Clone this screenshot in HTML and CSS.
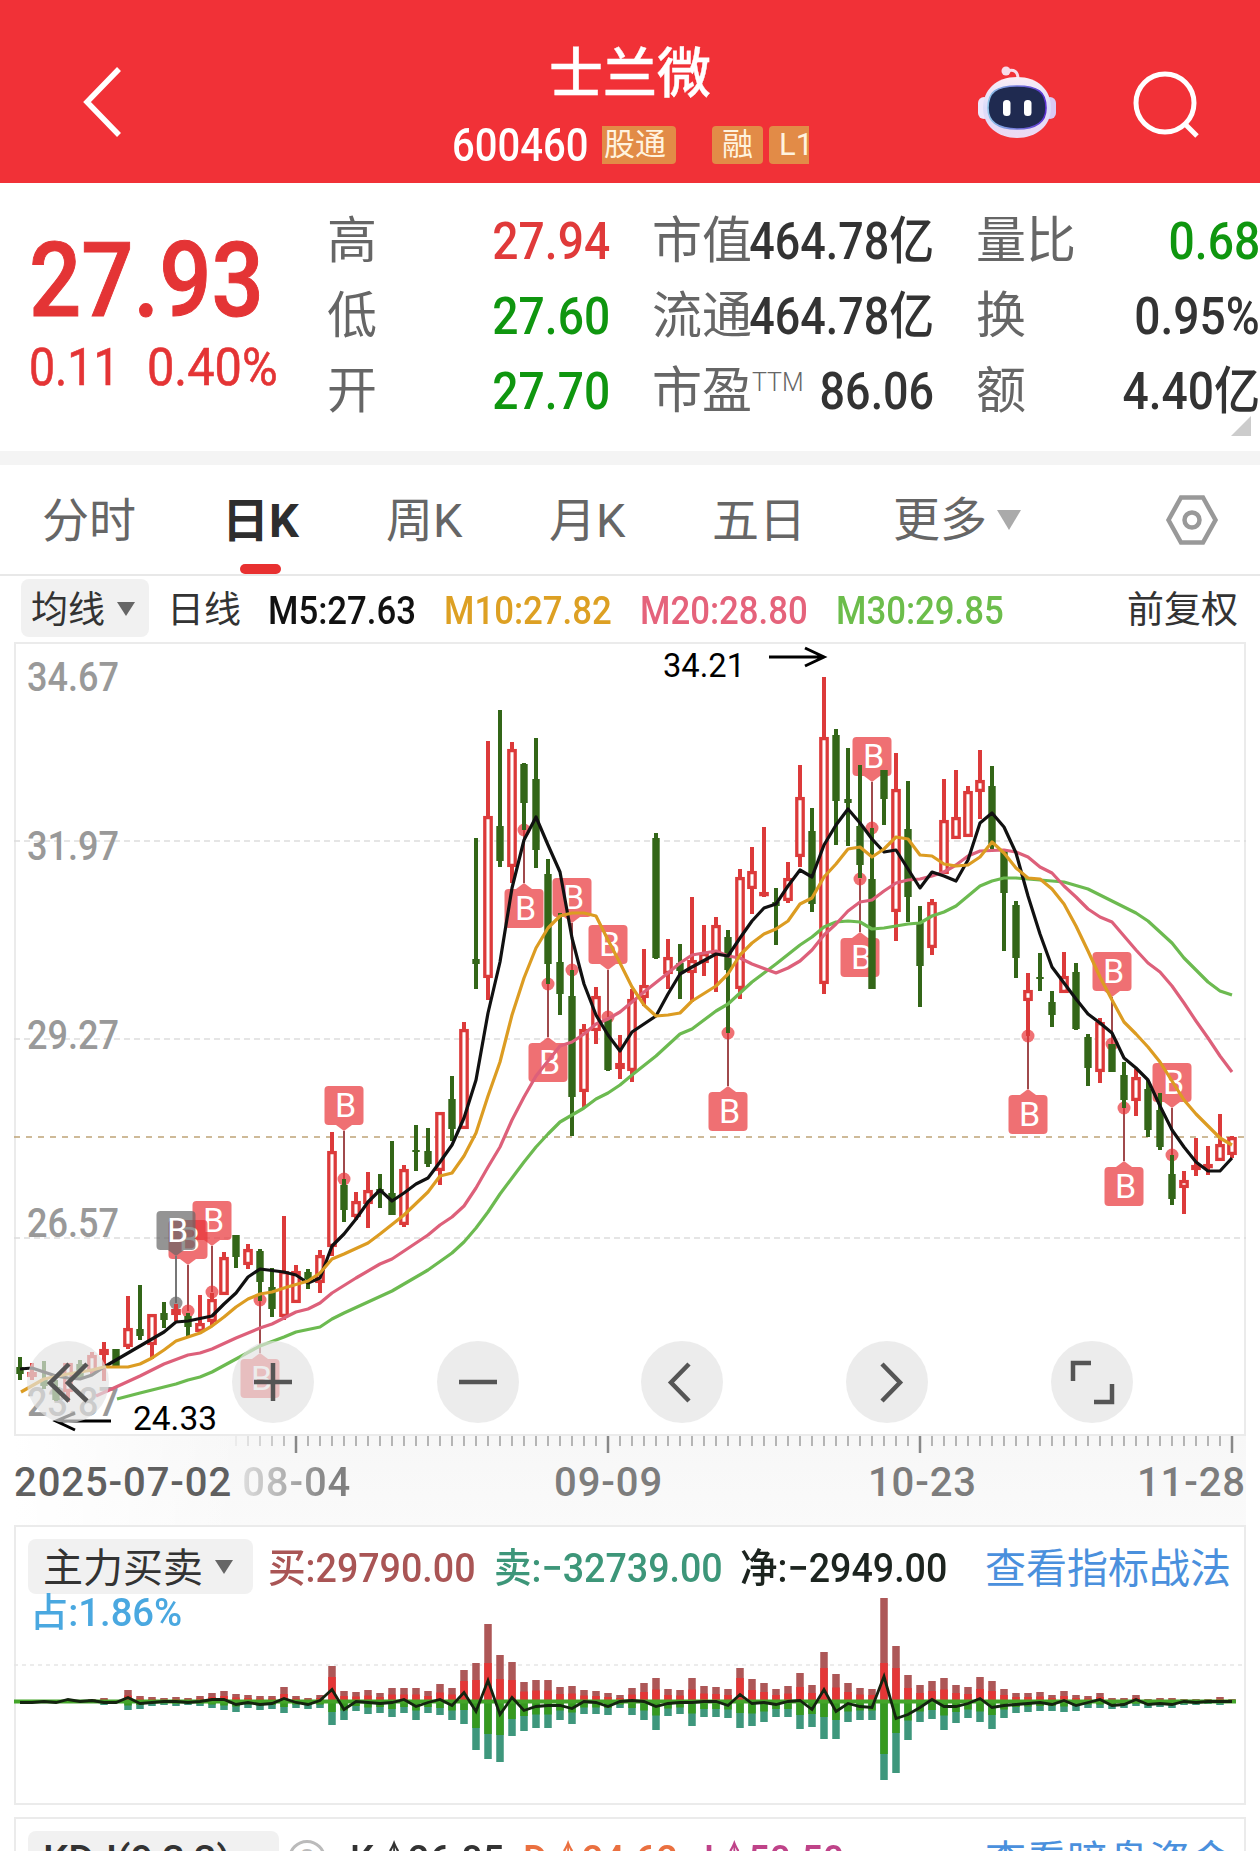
FILE: index.html
```html
<!DOCTYPE html>
<html lang="zh-CN">
<head>
  <meta charset="UTF-8">
  <title>士兰微 600460</title>
  <link rel="stylesheet" href="styles.css">
</head>
<body>

  <header class="topbar">
    <svg class="back" viewBox="0 0 50 80"><path d="M41 7 L9 40 L41 73"/></svg>
    <div class="stock">
      <h1>士兰微</h1>
      <div class="stock-sub">
        <span class="code">600460</span>
        <span class="tag tag-gt">股通</span>
        <span class="tag tag-rong">融</span>
        <span class="tag tag-l1">L1</span>
      </div>
    </div>
    <svg class="robot" viewBox="0 0 80 74">
      <defs>
        <linearGradient id="shell" x1="0" y1="0" x2="0" y2="1">
          <stop offset="0" stop-color="#fbeef6"/>
          <stop offset="0.5" stop-color="#dcdcfa"/>
          <stop offset="1" stop-color="#eed9f2"/>
        </linearGradient>
        <linearGradient id="rim" x1="0" y1="0" x2="1" y2="0">
          <stop offset="0" stop-color="#8fc4e8"/>
          <stop offset="1" stop-color="#5a2fd0"/>
        </linearGradient>
      </defs>
      <path d="M29 7 Q40 4 40 15" fill="none" stroke="#f8dcea" stroke-width="3"/>
      <circle cx="28" cy="7" r="4.5" fill="#f8dcea"/>
      <rect x="0" y="33" width="12" height="22" rx="6" fill="#eee6fb"/>
      <rect x="66" y="33" width="12" height="22" rx="6" fill="#d9c9f5"/>
      <path d="M39 13 C60 13 73 26 73 44 C73 62 58 74 39 74 C20 74 5 62 5 44 C5 26 18 13 39 13 Z" fill="url(#shell)"/>
      <path d="M39 22 C60 22 68 28 68 44 C68 58 58 65 39 65 C20 65 10 58 10 44 C10 28 18 22 39 22 Z" fill="#1f2a50" stroke="url(#rim)" stroke-width="1.6"/>
      <rect x="25" y="36" width="7.5" height="16" rx="3.5" fill="#fff"/>
      <rect x="46" y="36" width="7.5" height="16" rx="3.5" fill="#fff"/>
    </svg>
    <svg class="search" viewBox="0 0 70 70"><circle cx="33" cy="33" r="29"/><path d="M53 54 L65 66"/></svg>
  </header>

  <section class="quote">
    <div class="price">
      <div class="last">27.93</div>
      <div class="change"><span>0.11</span><span class="pct">0.40%</span></div>
    </div>
    <dl class="col col-a">
      <dt>高</dt><dd class="up">27.94</dd>
      <dt>低</dt><dd class="down">27.60</dd>
      <dt>开</dt><dd class="down">27.70</dd>
    </dl>
    <dl class="col col-b">
      <dt>市值</dt><dd>464.78亿</dd>
      <dt>流通</dt><dd>464.78亿</dd>
      <dt>市盈<sup>TTM</sup></dt><dd>86.06</dd>
    </dl>
    <dl class="col col-c">
      <dt>量比</dt><dd class="down">0.68</dd>
      <dt>换</dt><dd>0.95%</dd>
      <dt>额</dt><dd>4.40亿</dd>
    </dl>
    <i class="corner"></i>
  </section>

  <nav class="tabs">
    <a class="tab t1">分时</a>
    <a class="tab t2 active">日K</a>
    <a class="tab t3">周K</a>
    <a class="tab t4">月K</a>
    <a class="tab t5">五日</a>
    <a class="tab t6">更多<i class="caret caret-lg"></i></a>
    <svg class="gear" viewBox="0 0 54 52"><path d="M16 3.5 H38 L50.500 26 L38 48.500 H16 L3.500 26 Z"/><circle cx="27" cy="26" r="7.500"/></svg>
  </nav>

  <div class="ma-row">
    <span class="pill">均线<i class="caret"></i></span>
    <span class="ma-name">日线</span>
    <span class="ma m5">M5:27.63</span>
    <span class="ma m10">M10:27.82</span>
    <span class="ma m20">M20:28.80</span>
    <span class="ma m30">M30:29.85</span>
    <span class="adjust">前复权</span>
  </div>

  <section class="kline">
    <svg id="kline" viewBox="14 643 1232 793"></svg>
    <div class="tools">
      <button><svg viewBox="0 0 82 82"><path d="M42 23 L23 42 L42 60 M60 23 L41 42 L60 60"/></svg></button>
      <button><svg viewBox="0 0 82 82"><path d="M22 41 H60 M41 22 V60"/></svg></button>
      <button><svg viewBox="0 0 82 82"><path d="M22 41 H60"/></svg></button>
      <button><svg viewBox="0 0 82 82"><path d="M48 23 L30 41.500 L48 60"/></svg></button>
      <button><svg viewBox="0 0 82 82"><path d="M36 23 L54 41.500 L36 60"/></svg></button>
      <button><svg viewBox="0 0 82 82"><path d="M22 40 V22 H40 M61 43 V61 H43"/></svg></button>
    </div>
  </section>

  <div class="axis">
    <svg id="ruler" viewBox="14 1436 1232 18"></svg>
    <div class="dates">
      <span class="d0">2025-07-02</span>
      <span class="d1">08-04</span>
      <span class="d2">09-09</span>
      <span class="d3">10-23</span>
      <span class="d4">11-28</span>
    </div>
  </div>

  <section class="panel flow">
    <div class="panel-head">
      <span class="pill">主力买卖<i class="caret"></i></span>
      <span class="val f-buy">买:29790.00</span>
      <span class="val f-sell">卖:−32739.00</span>
      <span class="val f-net">净:−2949.00</span>
      <a class="link">查看指标战法</a>
    </div>
    <div class="f-ratio">占:1.86%</div>
    <svg id="flow" viewBox="14 1598 1232 205"></svg>
  </section>

  <section class="panel kdj">
    <div class="panel-head">
      <span class="pill">KDJ(9,3,3)</span>
      <span class="help">?</span>
      <span class="val k-k">K:<i class="arrow">↑</i>26.85</span>
      <span class="val k-d">D:<i class="arrow">↑</i>24.62</span>
      <span class="val k-j">J:<i class="arrow">↑</i>50.50</span>
      <a class="link">查看暗盘资金</a>
    </div>
  </section>

  <script src="script.js"></script>
</body>
</html>
```
FILE: styles.css
```css
* {
  box-sizing: border-box;
}

body {
  margin: 0;
  width: 1260px;
  height: 1851px;
  overflow: hidden;
  background: #fff;
  color: #333;
  font-family: Roboto, "Noto Sans CJK SC", sans-serif;
}

i {
  font-style: normal;
}

svg {
  display: block;
}

/* top bar */
.topbar {
  display: flex;
  height: 183px;
  background: #f13137;
  color: #fff;
}

.back {
  width: 50px;
  height: 80px;
  margin: 62px 0 0 78px;
  fill: none;
  stroke: #fff;
  stroke-width: 5.5;
}

.stock {
  width: 358px;
  margin-left: 324px;
}

h1 {
  margin: 35px 0 0;
  width: 356px;
  text-align: center;
  font-size: 54px;
  line-height: 80px;
  font-weight: 500;
  -webkit-text-stroke: 0.4px #fff;
}

.stock-sub {
  display: flex;
  height: 59px;
  align-items: center;
}

.code {
  width: 150px;
  font-size: 46px;
  font-weight: 500;
  transform: scaleX(0.87);
  transform-origin: left;
}

.tag {
  height: 38px;
  line-height: 37px;
  font-size: 31px;
  background: #e28b47;
  color: #fff3df;
  overflow: hidden;
  white-space: nowrap;
}

.tag-gt {
  width: 74px;
  padding-left: 2px;
  border-radius: 0 4px 4px 0;
}

.tag-rong {
  width: 51px;
  margin-left: 36px;
  padding-left: 10px;
  border-radius: 4px;
}

.tag-l1 {
  width: 40px;
  margin-left: 6px;
  padding-left: 10px;
  border-radius: 4px 0 0 4px;
}

.robot {
  width: 80px;
  height: 74px;
  margin: 64px 0 0 168px;
}

.search {
  width: 70px;
  height: 70px;
  margin: 70px 0 0 74px;
  fill: none;
  stroke: #fff;
  stroke-width: 5;
}

/* quote */
.quote {
  position: relative;
  display: flex;
  height: 282px;
  border-bottom: 14px solid #f4f4f4;
}

.price {
  width: 327px;
  padding: 42px 0 0 29px;
  color: #e43435;
}

.last {
  width: 260px;
  font-size: 104px;
  line-height: 112px;
  font-weight: 500;
  transform: scaleX(0.885);
  transform-origin: left;
  -webkit-text-stroke: 1px #e43435;
}

.change {
  display: flex;
  font-size: 51px;
  line-height: 61px;
}

.change span {
  width: 118px;
  transform: scaleX(0.91);
  transform-origin: left;
  -webkit-text-stroke: 0.6px #e43435;
}

.change .pct {
  transform: scaleX(0.955);
}

.col {
  display: grid;
  grid-template-columns: 94px minmax(0, 1fr);
  grid-auto-rows: 75px;
  align-content: start;
  margin: 21px 0 0;
  line-height: 75px;
  white-space: nowrap;
}

.col dt {
  font-size: 50px;
  color: #666;
}

.col dd {
  margin: 0;
  justify-self: end;
  font-size: 51px;
  font-weight: 500;
  transform: scaleX(0.905);
  transform-origin: right;
}

.col-b dd {
  transform: scaleX(0.88);
}

.col sup {
  font-size: 25px;
  font-weight: 300;
  line-height: 0;
  vertical-align: 17px;
}

.col-a {
  width: 283px;
}

.col-b {
  width: 282px;
  margin-left: 42px;
}

.col-c {
  width: 284px;
  margin-left: 42px;
}

.col .up {
  color: #e03a3a;
}

.col .down {
  color: #0f960f;
}

.corner {
  position: absolute;
  right: 9px;
  bottom: 15px;
  border-left: 20px solid transparent;
  border-bottom: 20px solid #ccc;
}

/* tabs */
.tabs {
  display: flex;
  height: 111px;
  border-bottom: 2px solid #e8e8e8;
  font-size: 47px;
  line-height: 111px;
  color: #666;
}

.tab {
  position: relative;
  height: 109px;
  white-space: nowrap;
}

.t1 { width: 180px; margin-left: 42px; }
.t2 { width: 164px; }
.t3 { width: 163px; }
.t4 { width: 163px; }
.t5 { width: 181px; }
.t6 { width: 274px; display: flex; align-items: center; gap: 10px; }

.active {
  font-weight: 700;
  color: #2e2e2e;
}

.active::after {
  content: "";
  position: absolute;
  left: 18px;
  bottom: 0;
  width: 41px;
  height: 10px;
  border-radius: 5px;
  background: #e83030;
}

.gear {
  width: 54px;
  height: 52px;
  margin-top: 29px;
  margin-left: -2px;
  fill: none;
  stroke: #999;
  stroke-width: 4.5;
}

.caret {
  border: 9px solid transparent;
  border-top: 14px solid #666;
  border-bottom: 0;
}

.caret-lg {
  border-width: 20px 12px 0;
  border-top-color: #aaa;
}

/* moving averages */
.ma-row {
  display: flex;
  align-items: center;
  height: 67px;
  padding: 0 22px 3px 21px;
  font-size: 37px;
  line-height: 58px;
  white-space: nowrap;
}

.pill {
  display: flex;
  align-items: center;
  background: #f1f1f1;
  border-radius: 8px;
}

.ma-row .pill {
  width: 128px;
  height: 58px;
  padding: 5px 0 0 10px;
  gap: 12px;
}

.pill .caret {
  margin-top: -3px;
}

.ma-name {
  width: 101px;
  margin-left: 18px;
  padding-top: 5px;
}

.ma {
  padding-top: 5px;
  font-size: 38px;
  font-weight: 500;
  transform: scaleX(0.915);
  transform-origin: left;
}

.m5 { width: 176px; color: #111; }
.m10 { width: 196px; color: #dda023; }
.m20 { width: 196px; color: #e5637b; }
.m30 { width: 196px; color: #6cbd4b; }

.adjust {
  margin-left: auto;
  padding-top: 5px;
}

/* candles */
.kline {
  position: relative;
  width: 1232px;
  height: 794px;
  margin: -1px 14px 0;
  border: 2px solid #ebebeb;
}

#kline {
  width: 1232px;
  height: 793px;
  margin: -1px -2px;
}

#kline text {
  font-family: Roboto, sans-serif;
}

.tools {
  position: absolute;
  left: 11px;
  top: 697px;
  display: flex;
  gap: 122.800px;
}

.tools button {
  width: 82px;
  height: 82px;
  padding: 0;
  border: 0;
  border-radius: 50%;
  background: rgba(227, 227, 227, 0.68);
}

.tools path {
  fill: none;
  stroke: #555;
  stroke-width: 4.5;
}

/* time axis */
.axis {
  height: 89px;
  margin: 0 14px;
  background: linear-gradient(90deg, #fff 0, rgba(255, 255, 255, 0) 230px), linear-gradient(#f7f7f7, #fafafa);
}

#ruler {
  width: 1232px;
  height: 18px;
}

.dates {
  display: flex;
  font-size: 40px;
  line-height: 58px;
  font-weight: 500;
  letter-spacing: 0.900px;
  color: #7d7d7d;
  white-space: nowrap;
}

.d0 { width: 229px; color: #606060; }
.d1 { width: 313px; }
.d2 { width: 315px; }
.d3 { width: 270px; }

.d1 {
  background: linear-gradient(90deg, #ddd 0, #808080 90px);
  background-clip: text;
  color: transparent;
}

/* indicator panels */
.panel {
  width: 1232px;
  margin: 0 14px;
  border: 2px solid #ebebeb;
  background: #fff;
}

.panel-head {
  display: flex;
  align-items: center;
  height: 55px;
  margin: 12px 13px 0 12px;
  font-size: 40px;
  line-height: 50px;
  font-weight: 500;
  white-space: nowrap;
}

.panel-head .pill {
  height: 55px;
  padding: 4px 0 0 15px;
  font-weight: 400;
}

.val {
  margin-top: 4px;
  transform: scaleX(0.94);
  transform-origin: left;
}

.flow {
  height: 280px;
}

.flow .pill {
  width: 225px;
  gap: 12px;
}

.f-buy { width: 226px; margin-left: 15px; color: #a95555; }
.f-sell { width: 246px; color: #3d9679; }
.f-net { width: 230px; color: #1c241f; }

.link {
  margin: 4px 0 0 auto;
  font-size: 41px;
  font-weight: 400;
  color: #4a90dd;
}

.f-ratio {
  width: 200px;
  height: 40px;
  margin: -1px 0 -35px 14px;
  line-height: 40px;
  font-size: 39px;
  font-weight: 500;
  color: #4aa8e0;
  transform: scaleX(0.98);
  transform-origin: left;
}

#flow {
  width: 1232px;
  height: 205px;
  margin-left: -2px;
}

.kdj {
  height: 120px;
  margin-top: 12px;
}

.kdj .pill {
  width: 251px;
  font-weight: 500;
}

.help {
  width: 38px;
  height: 38px;
  margin: 0 24px 0 9px;
  border: 3px solid #bbb;
  border-radius: 50%;
  text-align: center;
  font-size: 28px;
  line-height: 33px;
  color: #bbb;
}

.k-k { width: 173px; }
.k-d { width: 170px; color: #ea7040; }
.k-j { width: 170px; color: #bf4389; }

.arrow {
  display: inline-block;
  width: 26px;
  transform: scaleX(0.55);
  transform-origin: left;
}
```
FILE: script.js
```js
// candles: [up, high, bodyTop, bodyBottom, low]
const candles = [
  [0,1357,1367,1374,1380],[1,1363,1372,1377,1380],[0,1361,1379,1386,1389],[0,1380,1387,1400,1401],[1,1363,1363,1392,1402],
  [0,1360,1364,1378,1380],[1,1352,1355,1372,1375],[1,1342,1349,1355,1381],[0,1349,1349,1366,1366],[1,1296,1328,1347,1349],
  [0,1285,1329,1336,1340],[1,1314,1314,1345,1359],[0,1302,1313,1320,1328],[1,1304,1309,1315,1321],[0,1313,1316,1327,1336],
  [1,1295,1323,1332,1334],[1,1293,1299,1322,1326],[1,1252,1257,1295,1295],[0,1235,1235,1257,1268],[1,1244,1249,1265,1269],
  [0,1249,1251,1282,1301],[0,1268,1287,1309,1317],[1,1216,1271,1317,1320],[1,1265,1271,1303,1303],[0,1269,1272,1279,1289],
  [1,1250,1255,1283,1293],[1,1132,1151,1247,1256],[0,1179,1185,1210,1222],[1,1192,1201,1217,1220],[1,1172,1190,1204,1228],
  [0,1174,1189,1192,1208],[0,1141,1193,1215,1215],[1,1165,1169,1225,1227],[0,1125,1150,1152,1171],[0,1128,1151,1164,1167],
  [1,1112,1112,1171,1185],[0,1076,1099,1129,1141],[1,1022,1029,1129,1129],[0,838,959,964,989],[1,741,816,978,1000],
  [0,710,826,861,867],[1,742,749,867,883],[0,763,764,803,830],[0,738,779,850,868],[0,859,874,964,984],
  [0,913,962,994,1015],[0,970,996,1097,1136],[1,1024,1029,1092,1107],[1,987,996,1031,1044],[0,1018,1019,1070,1071],
  [1,1035,1063,1069,1079],[1,989,999,1071,1082],[1,949,985,998,1006],[0,833,838,958,959],[1,939,957,974,989],
  [0,944,963,971,999],[1,897,960,973,1002],[1,925,953,963,976],[1,917,925,954,992],[0,930,937,970,1033],
  [1,869,877,989,999],[1,847,871,889,914],[1,827,892,896,897],[0,888,902,906,945],[1,862,878,901,903],
  [1,765,797,857,867],[0,808,831,904,912],[1,677,737,984,994],[0,729,735,801,845],[0,748,799,803,846],
  [0,765,826,865,878],[0,828,879,989,989],[0,770,770,799,825],[1,753,789,912,941],[0,781,829,897,922],
  [0,906,923,966,1007],[1,899,902,948,955],[1,779,820,874,874],[1,770,817,839,839],[1,786,791,837,837],
  [1,750,780,792,819],[0,766,786,844,849],[0,851,851,893,951],[0,901,905,958,978],[1,973,990,1001,1036],
  [0,953,977,979,991],[0,991,1002,1015,1027],[1,952,976,993,993],[0,963,972,1029,1030],[0,1034,1037,1068,1086],
  [1,1018,1022,1072,1083],[0,1044,1044,1072,1072],[0,1062,1075,1100,1108],[1,1069,1077,1101,1116],[0,1080,1089,1130,1137],
  [0,1093,1110,1147,1150],[0,1155,1174,1199,1205],[1,1171,1180,1188,1214],[1,1138,1165,1170,1176],[1,1146,1164,1168,1175],
  [1,1114,1144,1161,1161],[1,1136,1137,1155,1158]
];

const averages = {
  "#6cba50": "117,1399 140,1393 176,1384 188,1380 200,1377 212,1372 236,1359 260,1346 284,1337 296,1332 320,1327 332,1319 344,1313 368,1302 392,1291 404,1284 428,1270 452,1253 464,1242 476,1228 488,1212 500,1194 512,1178 524,1162 536,1147 548,1134 560,1122 572,1115 584,1108 596,1099 608,1093 620,1085 632,1075 656,1056 680,1034 692,1029 716,1011 728,1004 752,982 776,964 800,945 812,937 824,927 836,922 848,921 860,922 872,929 884,928 908,924 920,923 932,916 944,912 956,906 968,896 980,886 992,881 1004,878 1016,878 1040,880 1064,882 1088,889 1112,901 1136,913 1148,921 1160,932 1172,943 1184,958 1196,970 1208,982 1220,991 1232,995",
  "#dd607a": "96,1396 116,1387 140,1376 164,1364 188,1355 200,1353 212,1349 236,1338 260,1328 272,1324 296,1312 308,1309 320,1303 332,1293 356,1278 380,1264 392,1259 428,1235 440,1225 452,1217 464,1206 476,1188 488,1167 500,1147 512,1120 524,1097 536,1076 548,1061 560,1046 572,1042 584,1034 596,1024 608,1019 620,1012 632,1002 644,992 668,973 680,963 692,955 716,951 728,956 740,958 752,964 776,973 788,968 800,961 812,950 824,935 836,924 848,911 860,902 872,900 884,891 896,883 908,880 920,879 932,876 944,872 956,865 968,856 980,851 1004,850 1016,852 1028,857 1040,867 1052,873 1064,886 1076,897 1088,909 1100,917 1112,922 1124,936 1136,950 1148,963 1160,972 1172,986 1184,1003 1196,1021 1208,1038 1220,1056 1232,1072",
  "#111": "20,1369 32,1368 44,1372 56,1376 68,1378 80,1379 92,1375 104,1367 128,1353 152,1339 164,1332 176,1322 188,1321 212,1316 224,1304 236,1293 248,1277 260,1269 284,1272 296,1275 308,1283 320,1278 332,1246 344,1234 356,1219 368,1202 380,1190 392,1201 404,1193 416,1184 428,1178 440,1162 452,1145 464,1118 476,1080 488,1013 500,962 512,888 524,840 536,817 548,845 560,872 572,938 584,984 596,1015 608,1035 620,1051 632,1032 656,1016 668,994 680,974 692,967 716,954 728,956 740,938 752,921 764,908 776,904 788,886 800,870 812,877 824,845 836,825 848,809 860,823 872,839 884,852 896,850 908,869 920,888 932,872 944,876 956,881 968,860 980,823 992,813 1004,827 1016,853 1028,896 1040,934 1052,967 1064,983 1076,999 1088,1014 1100,1023 1112,1033 1124,1058 1136,1068 1148,1080 1160,1106 1172,1130 1184,1147 1196,1162 1208,1171 1220,1171 1232,1158",
  "#dc9c22": "21,1392 44,1379 68,1374 92,1370 104,1367 128,1367 140,1364 152,1358 164,1350 176,1341 200,1333 212,1326 224,1317 236,1307 248,1299 260,1294 272,1292 284,1288 308,1281 320,1273 332,1259 344,1254 368,1243 380,1234 404,1215 428,1192 440,1176 452,1173 464,1156 476,1133 488,1096 500,1062 512,1015 524,978 536,948 548,928 560,916 572,913 584,913 596,916 608,940 620,963 632,987 644,1005 656,1016 668,1015 680,1013 692,1001 716,986 728,974 740,955 752,943 764,934 776,929 788,921 800,904 812,898 824,877 836,864 848,849 860,847 872,857 884,849 896,837 908,839 920,855 932,856 944,864 956,866 968,865 980,857 992,842 1004,853 1016,868 1028,878 1040,879 1052,889 1064,904 1076,926 1088,951 1100,977 1112,1000 1124,1022 1136,1034 1148,1047 1160,1062 1172,1081 1184,1100 1196,1114 1208,1126 1220,1138 1232,1145"
};

// buy markers: [x, dotY, boxTop, color]
const RED = "#e83338";
const markers = [
  [212,1292,1201,RED],[188,1311,1220,RED],[176,1303,1211,"#666"],[260,1300,1359,RED],[344,1179,1086,RED],
  [524,830,889,RED],[572,970,878,RED],[608,1017,925,RED],[548,984,1043,RED],[728,1033,1092,RED],
  [872,828,737,RED],[860,879,938,RED],[1028,1036,1095,RED],[1112,1044,952,RED],[1124,1108,1167,RED],[1172,1155,1063,RED]
];

const x = i => 20 + i * 12;

function label(tx, ty, str, width, size, color, weight) {
  return `<text x="${tx}" y="${ty}" textLength="${width}" lengthAdjust="spacingAndGlyphs" font-size="${size}" fill="${color}" font-weight="${weight}">${str}</text>`;
}

function drawKline() {
  let s = "";
  [841, 1039, 1238].forEach(y => {
    s += `<path d="M14 ${y}H1246" stroke="#ddd" stroke-width="1.3" stroke-dasharray="6 4"/>`;
  });
  s += `<path d="M14 1137H1246" stroke="#bfa477" stroke-width="1.700" stroke-dasharray="6 6"/>`;
  [[691, "34.67"], [860, "31.97"], [1049, "29.27"], [1237, "26.57"], [1416, "23.87"]].forEach(l => {
    s += label(27, l[0], l[1], 92, 40, "#999", 500);
  });

  markers.forEach(([mx, dot, top, color]) => {
    const above = top < dot;
    const edge = above ? top + 39 : top;
    const tip = above ? edge + 6 : edge - 6;
    s += `<path d="M${mx} ${dot}V${tip}" stroke="${color === RED ? "#a04a4c" : "#777"}" stroke-width="2"/>`;
    s += `<g fill="${color}" fill-opacity="0.7"><circle cx="${mx}" cy="${dot}" r="6.500"/>`;
    s += `<rect x="${mx - 19.5}" y="${top}" width="39" height="39" rx="4"/>`;
    s += `<path d="M${mx - 8} ${edge}L${mx} ${tip}L${mx + 8} ${edge}Z"/></g>`;
    s += `<text x="${mx + 1.5}" y="${top + 31}" text-anchor="middle" font-size="34" fill="#fff">B</text>`;
  });

  candles.forEach(([up, high, top, bottom, low], i) => {
    const cx = x(i);
    const c = up ? "#dc3a3a" : "#336618";
    s += `<path d="M${cx} ${high}V${top}M${cx} ${bottom}V${low}" stroke="${c}" stroke-width="4"/>`;
    if (up) {
      s += `<rect x="${cx - 3.2}" y="${top + 1.6}" width="6.4" height="${Math.max(bottom - top - 3.2, 1)}" fill="${bottom - top > 7 ? "#fff" : c}" stroke="${c}" stroke-width="3.3"/>`;
    } else {
      s += `<rect x="${cx - 3.700}" y="${top}" width="7.400" height="${bottom - top}" fill="${c}"/>`;
    }
  });

  Object.entries(averages).forEach(([c, pts]) => {
    s += `<polyline points="${pts}" fill="none" stroke="${c}" stroke-width="3.2" stroke-linejoin="round"/>`;
  });

  s += label(663, 677, "34.21", 82, 34, "#000", 400);
  s += `<path d="M769 657H823M805 648L824 657L805 666" fill="none" stroke="#000" stroke-width="3"/>`;
  s += label(133, 1430, "24.33", 84, 34, "#000", 400);
  s += `<path d="M111 1421H57M75 1413L56 1421L75 1430" fill="none" stroke="#000" stroke-width="3"/>`;
  document.getElementById("kline").innerHTML = s;
}

function drawRuler() {
  let s = "";
  for (let i = 18; i < 102; i++) {
    const major = (i - 23) % 26 === 0;
    const fade = Math.min(1, (i - 17) / 6);
    s += `<path d="M${x(i)} 1436v${major ? 17 : 10}" stroke="#888" stroke-opacity="${fade}" stroke-width="${major ? 2.5 : 1.2}"/>`;
  }
  document.getElementById("ruler").innerHTML = s;
}

// main force flow: [buy, sell, buyInner, sellInner]
const flow = [
  [0,0],[0,0],[0,2],[1,2],[2,1],[1,2],[2,1],[3,4],[1,2],[11,9],[5,8],[4,5],[3,4],[4,5],[3,4],[5,5],[8,7],[10,9],[7,11],[6,7],
  [5,9],[5,8],[14,12],[5,7],[3,8],[6,7],[35,24,24,11],[10,19],[9,10],[11,13],[8,12],[13,16],[13,12],[13,19],[10,12],[17,14],
  [13,19],[31,23,20,9],[38,49,21,27],[77,58,38,33],[46,61,22,34],[39,35,21,18],[19,30],[21,27],[21,27],[14,19],[15,23],[11,13],
  [10,13],[8,14],[6,7],[13,14],[18,19],[23,29],[12,15],[11,13],[23,25],[15,16],[14,16],[12,17],[33,27,23,12],[22,25],[18,21],
  [12,16],[15,16],[28,28],[16,26],[49,38,33,16],[27,38],[18,21],[13,19],[12,19],[103,79,38,53],[55,72,33,32],[26,39],[16,21],
  [20,18],[23,29],[16,22],[14,17],[24,21],[20,28],[12,17],[8,12],[8,11],[9,10],[6,10],[10,11],[6,10],[5,7],[8,7],[3,8],[3,7],
  [6,5],[2,7],[3,6],[3,7],[2,4],[2,4],[2,3],[4,4],[2,2]
];

// net line, offset from the axis
const net = [
  1,1,0,1,-2,0,-1,1,1,-4,2,1,0,0,1,0,-2,-2,3,1,3,2,-3,1,3,-1,-12,8,0,1,2,1,-2,5,1,-2,4,-9,10,-21,13,-4,9,5,4,4,7,0,1,5,0,-1,
  0,5,2,1,1,0,0,4,-7,2,1,3,0,-1,8,-12,10,2,5,6,-25,17,13,6,-2,5,5,2,-3,6,4,3,2,1,3,-1,4,1,-2,4,3,-2,3,2,3,0,1,0,0,0
];

function drawFlow() {
  const base = 1701;
  let s = `<path d="M14 1665H1246" stroke="#e6e6e6" stroke-width="1.500" stroke-dasharray="4 4"/>`;
  flow.forEach(([buy, sell, b = buy * 0.5, d = sell * 0.5], i) => {
    const left = x(i) - 3.75;
    s += `<rect x="${left}" y="${base - buy}" width="7.500" height="${buy}" fill="#ad5757"/>`;
    s += `<rect x="${left}" y="${base - b}" width="7.500" height="${b}" fill="#e43636"/>`;
    s += `<rect x="${left}" y="${base}" width="7.500" height="${sell}" fill="#3e977c"/>`;
    s += `<rect x="${left}" y="${base}" width="7.500" height="${d}" fill="#36991f"/>`;
  });
  s += `<path d="M14 ${base + 0.5}H1236" stroke="#44a52a" stroke-width="4"/>`;
  const pts = net.map((v, i) => `${x(i)},${base + 0.5 + v}`).join(" ");
  s += `<polyline points="${pts}" fill="none" stroke="#14240f" stroke-width="2.800"/>`;
  document.getElementById("flow").innerHTML = s;
}

drawKline();
drawRuler();
drawFlow();
```
